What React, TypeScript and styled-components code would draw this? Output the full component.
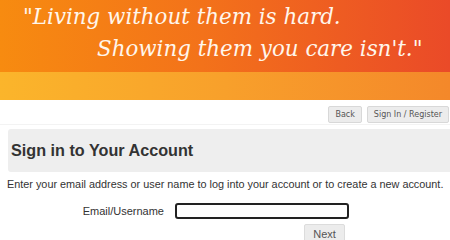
import styled, { createGlobalStyle } from "styled-components";

const GlobalStyle = createGlobalStyle`
  html, body {
    margin: 0;
    padding: 0;
    background: #ffffff;
    overflow: hidden;
  }
  body {
    font-family: "Liberation Sans", Arial, sans-serif;
  }
`;

const Page = styled.div`
  width: 450px;
  overflow: hidden;
`;

const Banner = styled.header`
  height: 72px;
  background: linear-gradient(to right, #f78b10 0%, #f3721a 45%, #ea4a28 100%);
  box-sizing: border-box;
  padding-top: 1px;
`;

const QuoteLine = styled.div<{ indent: number }>`
  padding-left: ${(p) => p.indent}px;
  font-family: "DejaVu Serif", "Liberation Serif", serif;
  font-style: italic;
  font-size: 21.4px;
  line-height: 32px;
  color: #fff6ec;
  white-space: nowrap;
`;

const Band = styled.div`
  height: 28px;
  background: linear-gradient(to right, #fbb52b 0%, #f8a02b 50%, #f4882a 100%);
`;

const Toolbar = styled.nav`
  display: flex;
  justify-content: flex-end;
  gap: 5px;
  padding: 6px 1px 0 0;
  height: 17px;
`;

const SmallButton = styled.button`
  height: 17px;
  padding: 0 6px;
  border: 1px solid #d8d8d8;
  border-radius: 2px;
  background: #ececec;
  color: #555;
  font-family: "DejaVu Sans", Verdana, sans-serif;
  font-size: 8px;
`;

const Divider = styled.div`
  margin-top: 1px;
  height: 1px;
  background: #f3f3f3;
`;

const Content = styled.main`
  padding: 4px 0 0 8px;
`;

const TitlePanel = styled.div`
  height: 43px;
  display: flex;
  align-items: center;
  padding-left: 3px;
  background: #eeeeee;
  border-radius: 3px 0 0 3px;
`;

const Title = styled.h1`
  margin: 0;
  font-size: 16.2px;
  font-weight: bold;
  color: #333;
`;

const Intro = styled.p`
  margin: 5px 0 0 -1px;
  font-size: 10.85px;
  line-height: 14px;
  color: #333;
  white-space: nowrap;
`;

const FormRow = styled.div`
  display: grid;
  grid-template-columns: 156px 174px;
  column-gap: 11px;
  align-items: center;
  margin-top: 12px;
`;

const Label = styled.label`
  text-align: right;
  font-size: 11px;
  color: #333;
`;

const TextInput = styled.input`
  box-sizing: border-box;
  width: 174px;
  height: 16px;
  border: 2px solid #222;
  border-radius: 3px;
  padding: 0 3px;
`;

const Actions = styled.div`
  display: flex;
  padding: 5px 0 0 296px;
`;

const NextButton = styled.button`
  width: 41px;
  height: 20px;
  border: 1px solid #dcdcdc;
  border-radius: 2px;
  background: #ececec;
  color: #555;
  font-family: "Liberation Sans", Arial, sans-serif;
  font-size: 11px;
  padding: 0;
`;

export default function App() {
  return (
    <Page>
      <GlobalStyle />
      <Banner>
        <QuoteLine indent={23}>"Living without them is hard.</QuoteLine>
        <QuoteLine indent={97}>Showing them you care isn't."</QuoteLine>
      </Banner>
      <Band />
      <Toolbar>
        <SmallButton>Back</SmallButton>
        <SmallButton>Sign In / Register</SmallButton>
      </Toolbar>
      <Divider />
      <Content>
        <TitlePanel>
          <Title>Sign in to Your Account</Title>
        </TitlePanel>
        <Intro>
          Enter your email address or user name to log into your account or to
          create a new account.
        </Intro>
        <FormRow>
          <Label htmlFor="email">Email/Username</Label>
          <TextInput id="email" type="text" />
        </FormRow>
        <Actions>
          <NextButton>Next</NextButton>
        </Actions>
      </Content>
    </Page>
  );
}
